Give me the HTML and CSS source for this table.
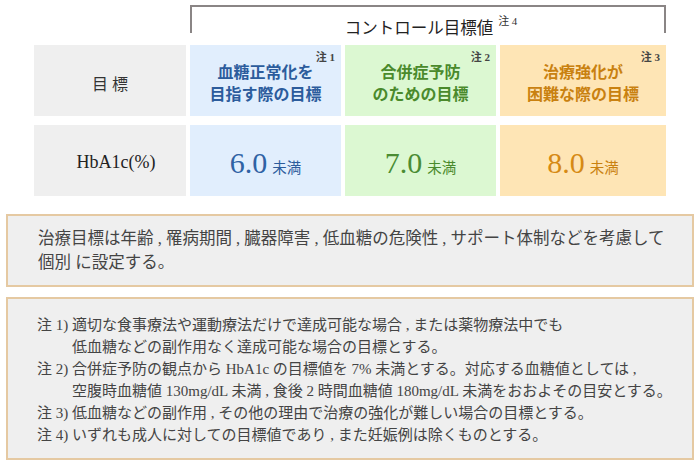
FILE: index.html
```html
<!DOCTYPE html>
<html lang="ja">
<head>
<meta charset="utf-8">
<title>コントロール目標値</title>
<link rel="stylesheet" href="styles.css">
</head>
<body>
<div class="page">
  <div class="bracket">
    <div class="bracket-title">コントロール目標値<span class="note-sup">注 4</span></div>
  </div>

  <div class="goal-table">
    <div class="cell cell-label"><span class="label-text">目&nbsp;標</span></div>
    <div class="cell cell-blue head">
      <span class="note">注 1</span>
      <span class="head-text">血糖正常化を<br>目指す際の目標</span>
    </div>
    <div class="cell cell-green head">
      <span class="note">注 2</span>
      <span class="head-text">合併症予防<br>のための目標</span>
    </div>
    <div class="cell cell-orange head">
      <span class="note">注 3</span>
      <span class="head-text">治療強化が<br>困難な際の目標</span>
    </div>

    <div class="cell cell-label"><span class="hba">HbA1c(%)</span></div>
    <div class="cell cell-blue value"><span class="num">6.0</span><span class="unit">未満</span></div>
    <div class="cell cell-green value"><span class="num">7.0</span><span class="unit">未満</span></div>
    <div class="cell cell-orange value"><span class="num">8.0</span><span class="unit">未満</span></div>
  </div>

  <div class="info-box summary">
    <p class="summary-text">治療目標は年齢 , 罹病期間 , 臓器障害 , 低血糖の危険性 , サポート体制などを考慮して<br>個別 に設定する。</p>
  </div>

  <div class="info-box notes">
    <p class="note-item">注 1) 適切な食事療法や運動療法だけで達成可能な場合 , または薬物療法中でも<br>低血糖などの副作用なく達成可能な場合の目標とする。</p>
    <p class="note-item">注 2) 合併症予防の観点から HbA1c の目標値を 7% 未満とする。対応する血糖値としては ,<br>空腹時血糖値 130mg/dL 未満 , 食後 2 時間血糖値 180mg/dL 未満をおおよその目安とする。</p>
    <p class="note-item">注 3) 低血糖などの副作用 , その他の理由で治療の強化が難しい場合の目標とする。</p>
    <p class="note-item">注 4) いずれも成人に対しての目標値であり , また妊娠例は除くものとする。</p>
  </div>
</div>
</body>
</html>
```

FILE: styles.css
```css
* {
  box-sizing: border-box;
}

html, body {
  margin: 0;
  padding: 0;
  background: #ffffff;
}

body {
  font-family: "Liberation Serif", "Noto Sans CJK JP", serif;
  color: #333333;
}

.page {
  width: 700px;
  padding: 5px 6px 0 6px;
}

/* bracket over the three goal columns */
.bracket {
  margin-left: 184px;
  width: 476px;
  height: 28px;
  border: 2px solid #8a8585;
  border-bottom: none;
  display: flex;
  justify-content: center;
}

.bracket-title {
  padding-top: 12px;
  padding-left: 6px;
  font-size: 16.5px;
  line-height: 20px;
  color: #222222;
  white-space: nowrap;
}

.note-sup {
  font-size: 11px;
  margin-left: 5px;
  vertical-align: 9px;
  line-height: 0;
  color: #333333;
}

/* goal table */
.goal-table {
  margin-top: 12px;
  margin-left: 28px;
  display: grid;
  grid-template-columns: 152px 151px 151px 166px;
  grid-template-rows: 71px 71px;
  column-gap: 4px;
  row-gap: 9px;
}

.cell {
  position: relative;
  display: flex;
  align-items: center;
  justify-content: center;
}

.cell-label {
  background: #efefef;
}

.cell-blue {
  background: #e1eefd;
  color: #2c5c9c;
}

.cell-green {
  background: #dcf8d2;
  color: #4a8a2c;
}

.cell-orange {
  background: #fee5b5;
  color: #c98110;
}

.label-text {
  font-size: 16px;
  color: #333333;
  padding-top: 5px;
}

.hba {
  font-size: 18px;
  color: #222222;
  padding-top: 4px;
  padding-left: 12px;
}

.note {
  position: absolute;
  top: 3px;
  right: 6px;
  font-size: 11px;
  font-weight: bold;
  color: #444444;
}

.head-text {
  font-size: 16px;
  line-height: 22px;
  font-weight: bold;
  text-align: center;
  padding-top: 7px;
}

.value {
  align-items: baseline;
  padding-top: 21px;
}

.num {
  font-size: 30px;
  line-height: 34px;
}

.unit {
  font-size: 14.5px;
  margin-left: 5px;
}

.cell-blue .num { color: #2f62a4; }
.cell-green .num { color: #4a8c33; }
.cell-orange .num { color: #d68a14; }

/* info boxes */
.info-box {
  background: #efefef;
  border: 2px solid #e5c9a2;
}

.summary {
  margin-top: 18px;
  height: 73px;
  padding: 11px 20px 0 30px;
}

.summary-text {
  margin: 0;
  font-size: 16.5px;
  line-height: 23.5px;
  color: #444444;
  white-space: nowrap;
}

.notes {
  margin-top: 10px;
  height: 163px;
  padding: 15px 10px 0 29px;
}

.note-item {
  margin: 0;
  font-size: 15px;
  line-height: 22px;
  color: #444444;
  padding-left: 35px;
  text-indent: -35px;
  white-space: nowrap;
}
```
